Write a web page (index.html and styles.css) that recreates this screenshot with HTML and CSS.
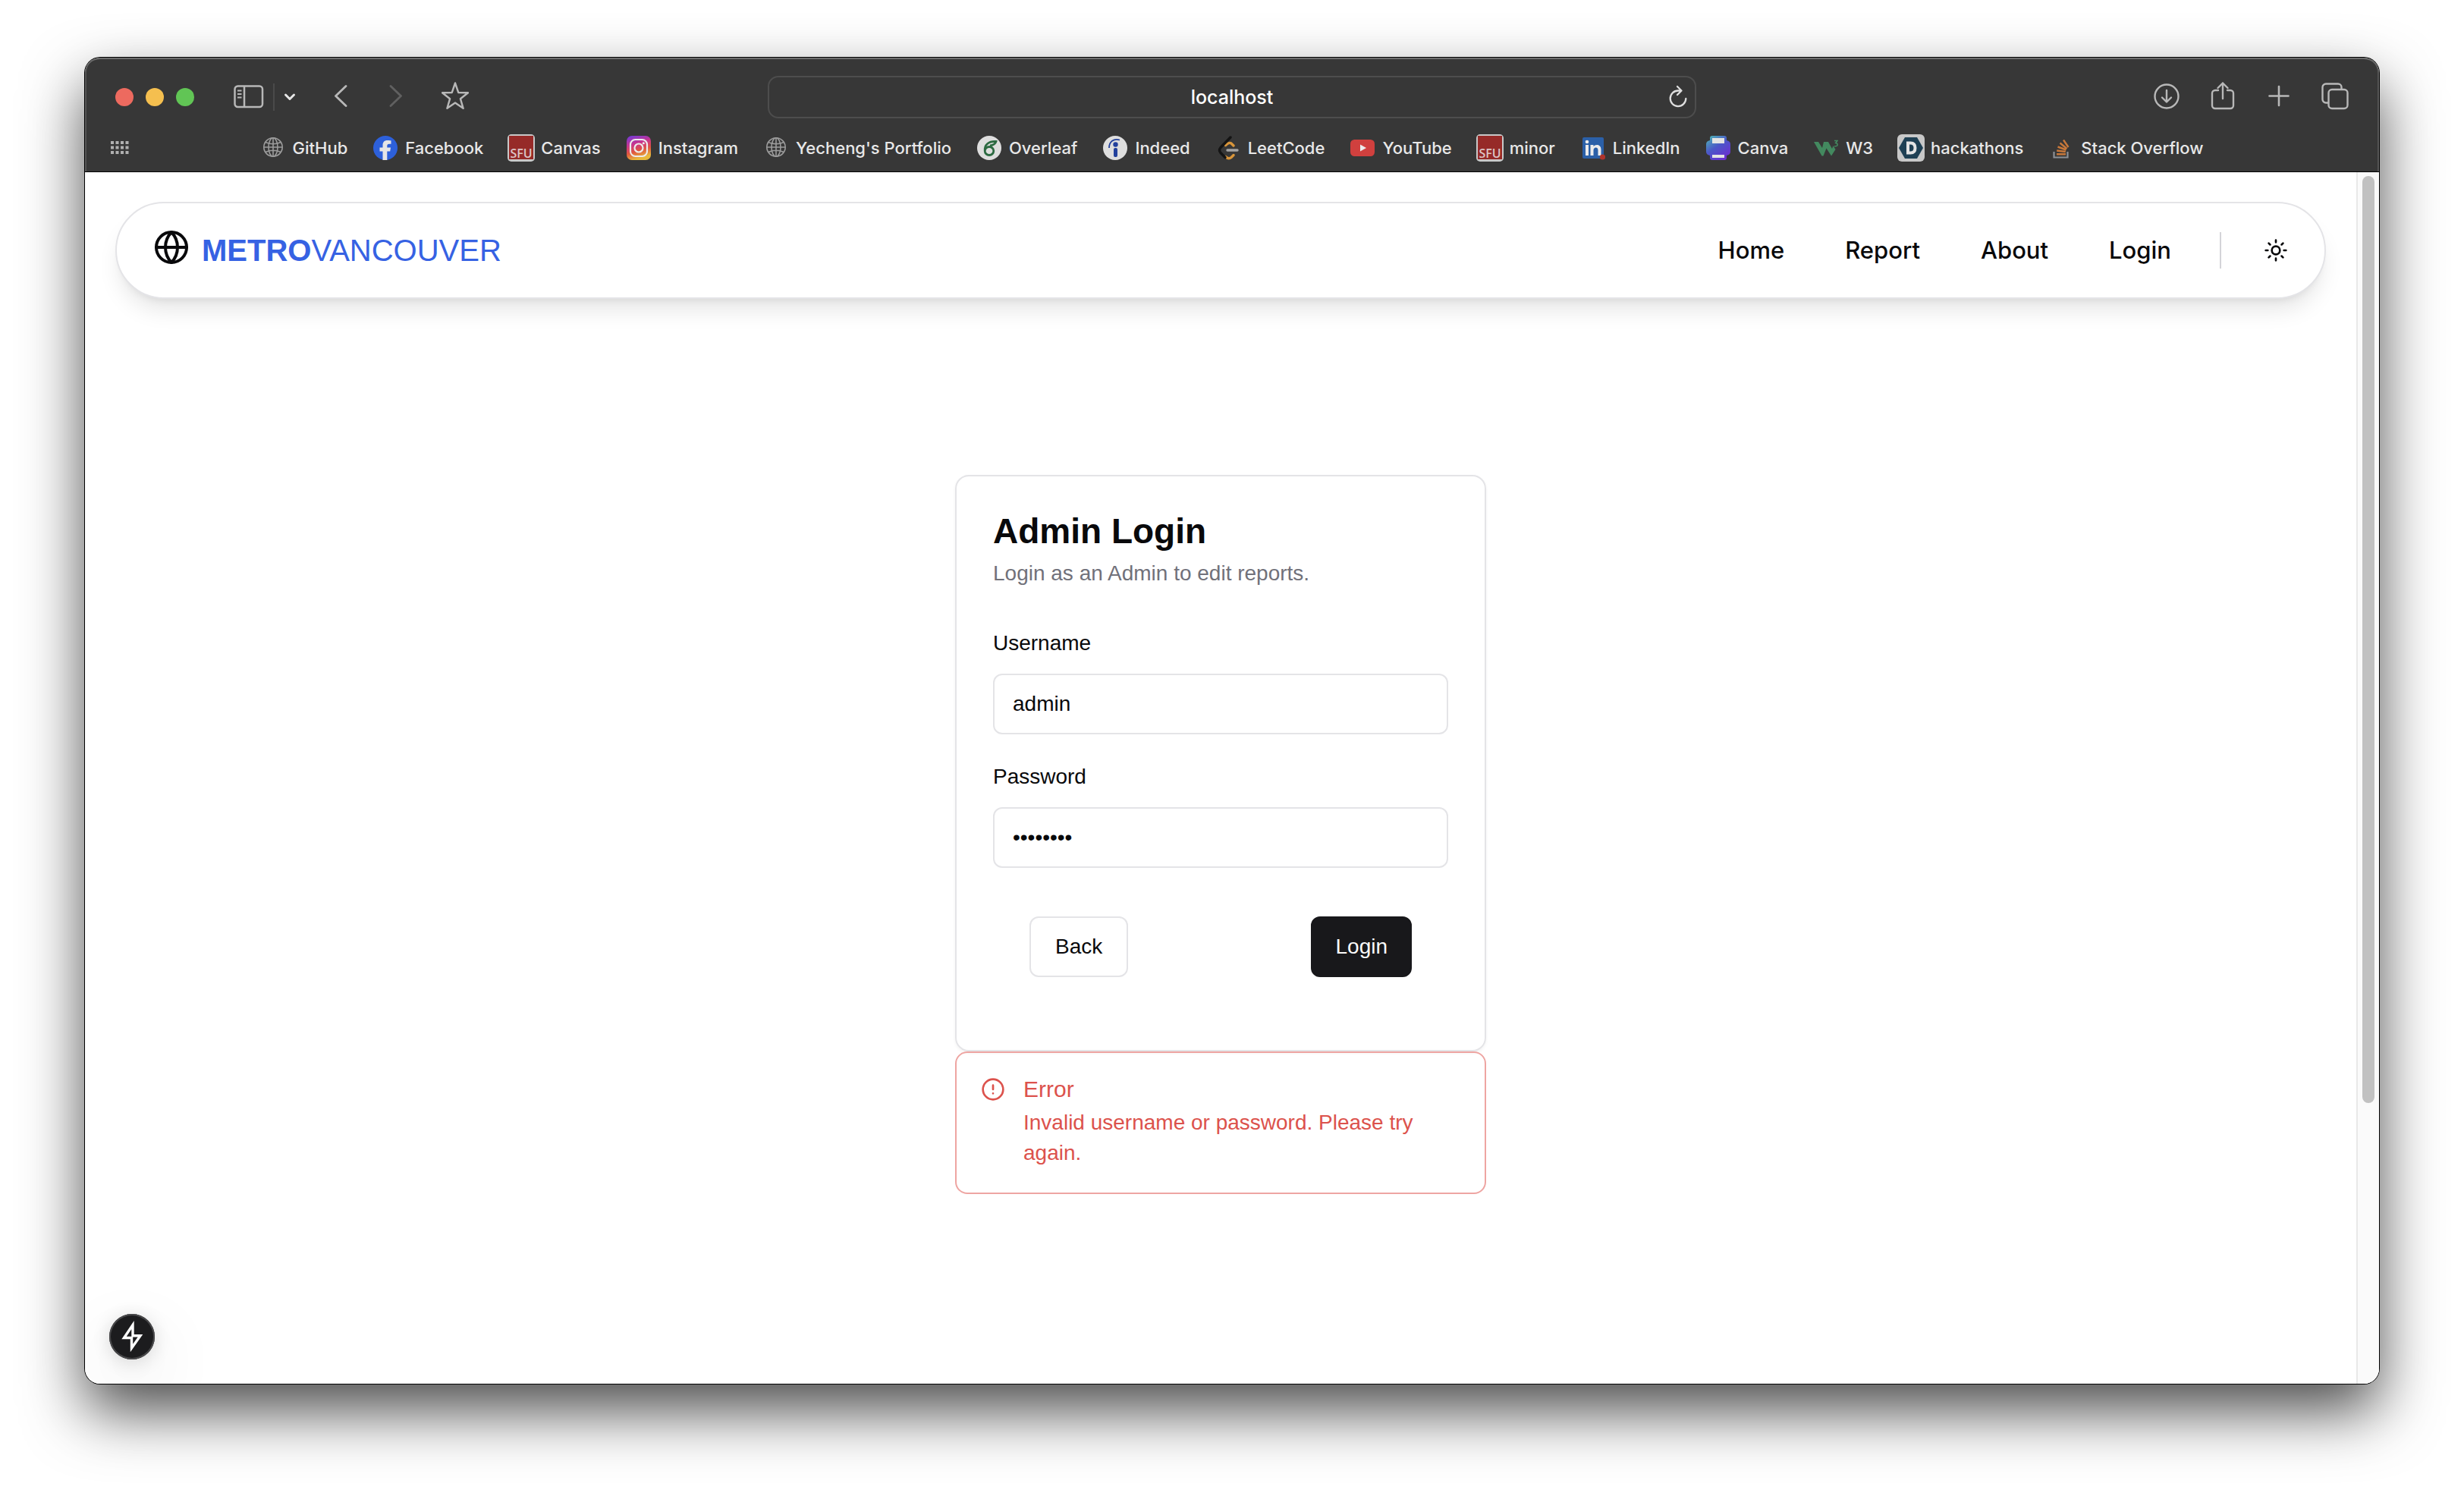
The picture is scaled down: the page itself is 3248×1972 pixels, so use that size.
FILE: index.html
```html
<!DOCTYPE html>
<html lang="en">
<head>
<meta charset="utf-8">
<title>Metro Vancouver – Admin Login</title>
<link rel="stylesheet" href="styles.css">
</head>
<body>
<svg class="defs" aria-hidden="true">
  <defs>
    <linearGradient id="insta" x1="0" y1="0" x2="0.3" y2="1">
      <stop offset="0" stop-color="#6a3be0"/><stop offset="0.4" stop-color="#c9348f"/><stop offset="0.7" stop-color="#e0553f"/><stop offset="1" stop-color="#e8b93c"/>
    </linearGradient>
    <linearGradient id="canva" x1="0" y1="0" x2="0.7" y2="1">
      <stop offset="0" stop-color="#4fc0b4"/><stop offset="0.5" stop-color="#4b58c8"/><stop offset="1" stop-color="#6c2fd0"/>
    </linearGradient>
    <symbol id="web" viewBox="0 0 32 32">
      <g fill="none" stroke="#9c9c9c" stroke-width="1.6"><circle cx="16" cy="15" r="12.2"/><ellipse cx="16" cy="15" rx="6" ry="12.2"/><path d="M16 3v24M4 15h24M6 8.5q10 4.500 20 0M6 21.500q10 -4.500 20 0"/></g>
    </symbol>
    <symbol id="sfu" viewBox="0 0 36 36">
      <rect width="36" height="36" rx="5" fill="#c8c8c8"/><rect x="2" y="2" width="32" height="31" fill="#962a28"/>
      <text x="18" y="31" text-anchor="middle" font-family="Open Sans" font-size="16" font-weight="600" fill="#dcc6c6">SFU</text>
    </symbol>
  </defs>
</svg>

<div class="window">
  <header class="chrome">
    <div class="toolbar">
      <div class="tools">
        <div class="lights"><span class="light red"></span><span class="light yellow"></span><span class="light green"></span></div>
        <div class="sidebar-tools">
          <button class="icon-button" aria-label="Show sidebar"><svg width="40" height="32" viewBox="0 0 40 32" fill="none" stroke="#b8b8b8" stroke-width="2.500"><rect x="1.500" y="1.500" width="36.500" height="27.500" rx="4"/><path d="M14 1.500v27.500"/><path d="M5 7.500h5.500M5 12h5.500M5 16.500h5.500" stroke-width="2"/></svg></button>
          <span class="tool-divider"></span>
          <button class="icon-button" aria-label="Tab groups"><svg width="16" height="16" viewBox="0 0 16 16" fill="none" stroke="#e6e6e6" stroke-width="3" stroke-linecap="round" stroke-linejoin="round"><path d="M2.500 5l5.500 5.500L13.500 5"/></svg></button>
        </div>
        <button class="icon-button" aria-label="Back"><svg width="24" height="32" viewBox="0 0 24 32" fill="none" stroke="#b8b8b8" stroke-width="2.800" stroke-linecap="round" stroke-linejoin="round"><path d="M18 1.500L4.500 14.500 18 27.500"/></svg></button>
        <button class="icon-button" aria-label="Forward"><svg width="24" height="32" viewBox="0 0 24 32" fill="none" stroke="#606060" stroke-width="2.800" stroke-linecap="round" stroke-linejoin="round"><path d="M5 1.500L18.500 14.500 5 27.500"/></svg></button>
        <button class="icon-button" aria-label="Bookmark"><svg width="36" height="40" viewBox="0 0 36 40" fill="none" stroke="#b8b8b8" stroke-width="2.400" stroke-linejoin="round"><path d="M18 1.500l4.300 12.600 12.700.2-10.100 7.900 3.700 12.600L18 27.400 7.400 34.800l3.700-12.600L1 14.300l12.700-.2z"/></svg></button>
      </div>
      <div class="address">
        <input class="address-input" type="text" value="localhost" aria-label="Address">
        <button class="icon-button" aria-label="Reload"><svg width="28" height="32" viewBox="0 0 28 32" fill="none" stroke="#dedede" stroke-width="2.300" stroke-linecap="round" stroke-linejoin="round"><path d="M16 7.500H14A10.300 10.300 0 1 0 24.300 18M13 2l5.500 5.500L13 13"/></svg></button>
      </div>
      <div class="tools tools-end">
        <button class="icon-button" aria-label="Downloads"><svg width="36" height="40" viewBox="0 0 36 40" fill="none" stroke="#b8b8b8" stroke-width="2.400" stroke-linecap="round" stroke-linejoin="round"><circle cx="18" cy="19" r="15.500"/><path d="M18 11v15M12 20.500l6 6 6-6"/></svg></button>
        <button class="icon-button" aria-label="Share"><svg width="36" height="40" viewBox="0 0 36 40" fill="none" stroke="#b8b8b8" stroke-width="2.400" stroke-linecap="round" stroke-linejoin="round"><path d="M12 11H8a4 4 0 0 0-4 4v16a4 4 0 0 0 4 4h20a4 4 0 0 0 4-4V15a4 4 0 0 0-4-4h-4M18 22V1.500M11.500 8L18 1.500 24.500 8"/></svg></button>
        <button class="icon-button" aria-label="New tab"><svg width="36" height="40" viewBox="0 0 36 40" fill="none" stroke="#b8b8b8" stroke-width="2.600" stroke-linecap="round"><path d="M18 6v25M5.500 18.500h25"/></svg></button>
        <button class="icon-button" aria-label="Tab overview"><svg width="36" height="40" viewBox="0 0 36 40" fill="none" stroke="#b8b8b8" stroke-width="2.400" stroke-linejoin="round"><rect x="9.500" y="10" width="25" height="25" rx="4.500"/><path d="M9.500 27.500H6A4.500 4.500 0 0 1 1.500 23V7A4.500 4.500 0 0 1 6 2.500h16A4.500 4.500 0 0 1 26.500 7v3"/></svg></button>
      </div>
    </div>

    <nav class="bookmarks" aria-label="Favourites">
      <button class="icon-button" aria-label="All favourites"><svg width="24" height="20" viewBox="0 0 24 20" fill="#b0b0b0"><path d="M0 1h4v4H0zM6.500 1h4v4h-4zM13 1h4v4h-4zM19.500 1h4v4h-4zM0 7.500h4v4H0zM6.500 7.500h4v4h-4zM13 7.500h4v4h-4zM19.500 7.500h4v4h-4zM0 14h4v4H0zM6.500 14h4v4h-4zM13 14h4v4h-4zM19.500 14h4v4h-4z"/></svg></button>
      <ul class="bookmark-list">
        <li><a class="bookmark" href="#"><svg class="favicon"><use href="#web"/></svg>GitHub</a></li>
        <li><a class="bookmark" href="#"><svg class="favicon" viewBox="0 0 32 32"><circle cx="16" cy="16" r="16" fill="#2d60da"/><path d="M12.500 32V20.500H8.500V15.500h4V12.500c0-4.500 2.500-6.500 6.500-6.500 2 0 4.500.4 4.500.4v4.300h-2.500c-2 0-2.700 1-2.700 2.300v2.500h4.700l-.8 5h-3.900V32z" fill="#e6e6e6"/></svg>Facebook</a></li>
        <li><a class="bookmark" href="#"><svg class="favicon favicon-large"><use href="#sfu"/></svg>Canvas</a></li>
        <li><a class="bookmark" href="#"><svg class="favicon" viewBox="0 0 32 32"><rect width="32" height="32" rx="7" fill="url(#insta)"/><g fill="none" stroke="#ececec" stroke-width="2.200"><rect x="5" y="5" width="22" height="22" rx="6.500"/><circle cx="16" cy="16" r="5.500"/></g><circle cx="22.300" cy="9.700" r="1.500" fill="#ececec"/></svg>Instagram</a></li>
        <li><a class="bookmark" href="#"><svg class="favicon"><use href="#web"/></svg>Yecheng's Portfolio</a></li>
        <li><a class="bookmark" href="#"><svg class="favicon" viewBox="0 0 32 32"><circle cx="16" cy="16" r="16" fill="#dedede"/><g fill="none" stroke="#2c6a41" stroke-width="2.800"><ellipse cx="16" cy="20" rx="5.800" ry="5.500"/><path d="M10.300 19.500C9.500 12 15 7 25 7.500c-1 4-5 5-8 5.500"/></g></svg>Overleaf</a></li>
        <li><a class="bookmark" href="#"><svg class="favicon" viewBox="0 0 32 32"><circle cx="16" cy="16" r="16" fill="#dedede"/><circle cx="16.500" cy="11.500" r="3.200" fill="#22409c"/><rect x="14" y="16" width="5" height="12" rx="2" fill="#22409c"/><path d="M8 16C8 8 14 3 22 5.500" fill="none" stroke="#22409c" stroke-width="1.800"/></svg>Indeed</a></li>
        <li><a class="bookmark" href="#"><svg class="favicon" viewBox="0 0 32 32" fill="none" stroke-width="3.400" stroke-linecap="round"><path d="M12.500 12.500Q17 8 20 10l3 3M12.500 27.500q4 4 7.500 1l3-3" stroke="#d8953a"/><path d="M19 2L6 15.500q-3 3.500 0 7l6 6" stroke="#141414"/><path d="M15 19h13" stroke="#a4a4a4"/></svg>LeetCode</a></li>
        <li><a class="bookmark" href="#"><svg class="favicon" viewBox="0 0 32 32"><rect y="5" width="32" height="22" rx="5.500" fill="#d0403e"/><path d="M13 11.500l8 4.500-8 4.500z" fill="#ececec"/></svg>YouTube</a></li>
        <li><a class="bookmark" href="#"><svg class="favicon favicon-large"><use href="#sfu"/></svg>minor</a></li>
        <li><a class="bookmark" href="#"><svg class="favicon" viewBox="0 0 32 32"><rect x="2" y="2" width="28" height="28" rx="2" fill="#2b60a8"/><path d="M6 12h4v14H6zM12.500 12h4v2c2.500-3.500 10-3 10 4v8h-4v-7c0-5-6-4.500-6 0v7h-4z" fill="#ececec"/><circle cx="8" cy="8" r="2.300" fill="#ececec"/><circle cx="28.500" cy="28" r="3.600" fill="#ae342c"/></svg>LinkedIn</a></li>
        <li><a class="bookmark" href="#"><svg class="favicon" viewBox="0 0 32 32"><path d="M8 0h16q3 0 3 3v3q5 1 5 5v10q0 4-5 5v3q0 3-3 3H8q-3 0-3-3v-3q-5-1-5-5V11q0-4 5-5V3q0-3 3-3z" fill="url(#canva)"/><path d="M8 3h16v7H8zM8 25h16v4H8z" fill="#e4e4e4"/></svg>Canva</a></li>
        <li><a class="bookmark" href="#"><svg class="favicon" viewBox="0 0 32 32"><path d="M0 8h6l5 8 2-8h6l5 9 1.500-4 3 5-5.500 8.500-6.500-10-4 10h-2z" fill="#43895f"/><path d="M27 6.500h4l-2.300 3q2.500.3 2.500 2.200 0 2.300-4.200 2" fill="none" stroke="#43895f" stroke-width="1.500"/></svg>W3</a></li>
        <li><a class="bookmark" href="#"><svg class="favicon favicon-large" viewBox="0 0 36 36"><rect width="36" height="36" rx="6" fill="#c8c8c8"/><path d="M10 4h16l8 14-8 14H10L2 18z" fill="#1f4054"/><path d="M14 11.500h3.500q6 0 6 6.500t-6 6.500H14z" fill="none" stroke="#e4e4e4" stroke-width="4"/></svg>hackathons</a></li>
        <li><a class="bookmark" href="#"><svg class="favicon" viewBox="0 0 32 32" fill="none"><path d="M6.500 21v7.500h18V21" stroke="#8c9096" stroke-width="2.200"/><path d="M10 24.300h12M10.200 19.500l11.600 1.500M11.500 14.500l11 4M14.500 9.500l9 7.500M19 5.500l6.500 9.500" stroke="#c8783a" stroke-width="2.400"/></svg>Stack Overflow</a></li>
      </ul>
    </nav>
  </header>

  <div class="viewport">
    <div class="page">
      <nav class="site-nav" aria-label="Main">
        <a class="brand" href="#">
          <svg class="brand-icon" viewBox="0 0 24 24" fill="none" stroke="#09090b" stroke-width="2" stroke-linecap="round" stroke-linejoin="round"><circle cx="12" cy="12" r="10"/><path d="M12 2a14.500 14.500 0 0 0 0 20 14.500 14.500 0 0 0 0-20M2 12h20"/></svg>
          <span><b>METRO</b>VANCOUVER</span>
        </a>
        <ul class="links">
          <li><a href="#">Home</a></li>
          <li><a href="#">Report</a></li>
          <li><a href="#">About</a></li>
          <li><a href="#">Login</a></li>
        </ul>
        <div class="theme">
          <button class="icon-button" aria-label="Toggle theme"><svg width="32" height="32" viewBox="0 0 24 24" fill="none" stroke="#09090b" stroke-width="2" stroke-linecap="round" stroke-linejoin="round"><circle cx="12" cy="12" r="4"/><path d="M12 2v2M12 20v2M4.930 4.930l1.410 1.410M17.660 17.660l1.410 1.410M2 12h2M20 12h2M6.340 17.660l-1.410 1.410M19.070 4.930l-1.410 1.410"/></svg></button>
        </div>
      </nav>

      <main class="login">
        <form class="card">
          <h1 class="card-title">Admin Login</h1>
          <p class="card-text">Login as an Admin to edit reports.</p>
          <div class="fields">
            <div class="field">
              <label for="username">Username</label>
              <input id="username" type="text" value="admin">
            </div>
            <div class="field">
              <label for="password">Password</label>
              <input id="password" type="password" value="password">
            </div>
          </div>
          <div class="actions">
            <button class="button" type="button">Back</button>
            <button class="button button-primary" type="button">Login</button>
          </div>
        </form>
        <div class="alert" role="alert">
          <svg class="alert-icon" viewBox="0 0 24 24" fill="none" stroke="currentColor" stroke-width="2" stroke-linecap="round" stroke-linejoin="round"><circle cx="12" cy="12" r="10"/><path d="M12 8v4M12 16h.01"/></svg>
          <div>
            <h2 class="alert-title">Error</h2>
            <p class="alert-text">Invalid username or password. Please try again.</p>
          </div>
        </div>
      </main>

      <button class="dev-badge" aria-label="Static route indicator"><svg width="60" height="60" viewBox="0 0 60 60"><path d="M31 14.500v14.200h10L29.500 45V31.500H19.500L31 14.500z" fill="none" stroke="#fff" stroke-width="3.400"/></svg></button>
    </div>
    <div class="scrollbar"><div class="thumb"></div></div>
  </div>
</div>
</body>
</html>
```

FILE: styles.css
```css
*, *::before, *::after { box-sizing: border-box; }

body {
  margin: 0;
  min-height: 100vh;
  display: flex;
  padding: 76px 112px 148px;
  background: #fff;
  color: #09090b;
  font-family: "Liberation Sans", Arial, sans-serif;
  font-size: 28px;
  line-height: 40px;
}

h1, h2, p, ul { margin: 0; padding: 0; font-weight: 400; }
ul { list-style: none; }
a { color: inherit; text-decoration: none; }
button, input { font: inherit; color: inherit; }
svg { display: block; flex: none; }
.defs { position: absolute; width: 0; height: 0; }

.icon-button {
  display: flex;
  padding: 0;
  border: 0;
  background: none;
}

/* Browser window */
.window {
  flex: 1;
  min-width: 0;
  display: flex;
  flex-direction: column;
  overflow: hidden;
  border-radius: 20px;
  box-shadow: 0 0 0 1px #000, 0 36px 80px rgba(0, 0, 0, 0.7);
}

.chrome {
  padding-bottom: 15px;
  border-bottom: 1px solid #000;
  border-radius: 20px 20px 0 0;
  background: #373737;
  box-shadow: inset 0 2px 0 #6c6c6c, inset 2px 0 0 #565656, inset -2px 0 0 #565656;
  color: #e8e8e8;
  font-family: Inter, sans-serif;
}

.toolbar {
  display: grid;
  grid-template-columns: 1fr minmax(400px, 1224px) 1fr;
  align-items: center;
  height: 103px;
  padding: 0 40px;
}

.tools { display: flex; align-items: center; gap: 48px; }
.tools-end { justify-content: flex-end; gap: 38px; }
.lights { display: flex; gap: 16px; margin-right: 4px; }
.light { width: 24px; height: 24px; border-radius: 50%; }
.red { background: #ed6a5f; }
.yellow { background: #f5bf4f; }
.green { background: #61c555; }
.sidebar-tools { display: flex; align-items: center; gap: 12px; }
.tool-divider { width: 2px; height: 36px; background: #4a4a4a; }

.address {
  display: flex;
  align-items: center;
  height: 56px;
  padding: 0 8px 0 36px;
  border: 2px solid #4d4d4d;
  border-radius: 14px;
}

.address-input {
  flex: 1;
  min-width: 0;
  padding: 0;
  border: 0;
  outline: 0;
  background: none;
  color: #fff;
  font-size: 25px;
  font-weight: 500;
  text-align: center;
}

.bookmarks {
  display: grid;
  grid-template-columns: 1fr auto 1fr;
  align-items: center;
  height: 32px;
  padding: 0 34px;
}

.bookmark-list { display: flex; gap: 34px; }

.bookmark {
  display: flex;
  align-items: center;
  gap: 10px;
  height: 32px;
  font-size: 22px;
  font-weight: 500;
  line-height: 32px;
  white-space: nowrap;
}

.favicon { width: 32px; height: 32px; }
.favicon-large { width: 36px; height: 36px; margin: 0 -2px; }

/* Page area */
.viewport { flex: 1; display: flex; background: #fff; }
.page { position: relative; flex: 1; min-width: 0; padding: 39px 40px; overflow: hidden; }

.scrollbar {
  width: 30px;
  padding: 5px 6px;
  border-left: 2px solid #e8e8e8;
  background: #fafafa;
}

.thumb { height: 77%; border-radius: 8px; background: #c1c1c1; }

.site-nav {
  display: flex;
  align-items: center;
  height: 128px;
  padding: 0 48px;
  border: 2px solid #e4e4e7;
  border-radius: 64px;
  background: #fff;
  box-shadow: 0 20px 30px -6px rgba(0, 0, 0, 0.1), 0 8px 12px -8px rgba(0, 0, 0, 0.1);
}

.brand { display: flex; gap: 16px; color: #3662e3; font-size: 40px; line-height: 56px; }
.brand-icon { width: 48px; height: 48px; }

.links {
  display: flex;
  gap: 80px;
  margin-left: auto;
  font-family: Inter, sans-serif;
  font-size: 31px;
  font-weight: 500;
}

.theme {
  display: flex;
  align-items: center;
  height: 48px;
  margin-left: 64px;
  padding-left: 56px;
  border-left: 2px solid #d4d4d8;
}

/* Login form */
.login { width: 100%; max-width: 700px; margin: 232px auto 0; }

.card {
  padding: 48px 48px 96px;
  border: 2px solid #e4e4e7;
  border-radius: 18px;
  box-shadow: 0 2px 4px rgba(0, 0, 0, 0.05);
}

.card-title { font-size: 46px; font-weight: 700; line-height: 48px; }
.card-text { margin-top: 12px; color: #71717a; }

.fields { display: flex; flex-direction: column; gap: 32px; margin-top: 48px; }
.field { display: flex; flex-direction: column; gap: 16px; }
.field label { line-height: 48px; }

.field input {
  height: 80px;
  padding: 0 24px;
  border: 2px solid #e4e4e7;
  border-radius: 12px;
  outline: 0;
  background: #fff;
}

.actions { display: flex; justify-content: space-between; margin-top: 64px; padding: 0 48px; }

.button {
  height: 80px;
  padding: 0 32px;
  border: 2px solid #e4e4e7;
  border-radius: 12px;
  background: #fff;
}

.button-primary { padding: 0 30px; border-color: #18181b; background: #18181b; color: #fafafa; }

.alert {
  display: flex;
  gap: 24px;
  padding: 32px;
  border: 2px solid #eea5a2;
  border-radius: 16px;
  color: #dc524c;
}

.alert-icon { width: 32px; height: 32px; }
.alert-title { font-size: 30px; line-height: 32px; }
.alert-text { margin-top: 8px; }

.dev-badge {
  position: absolute;
  left: 32px;
  bottom: 32px;
  width: 60px;
  height: 60px;
  padding: 0;
  border: 0;
  border-radius: 50%;
  background: #1c1c1e;
  box-shadow: inset 0 0 0 2px #48484a, 0 4px 24px rgba(0, 0, 0, 0.14), 0 32px 96px rgba(0, 0, 0, 0.12);
}
```
